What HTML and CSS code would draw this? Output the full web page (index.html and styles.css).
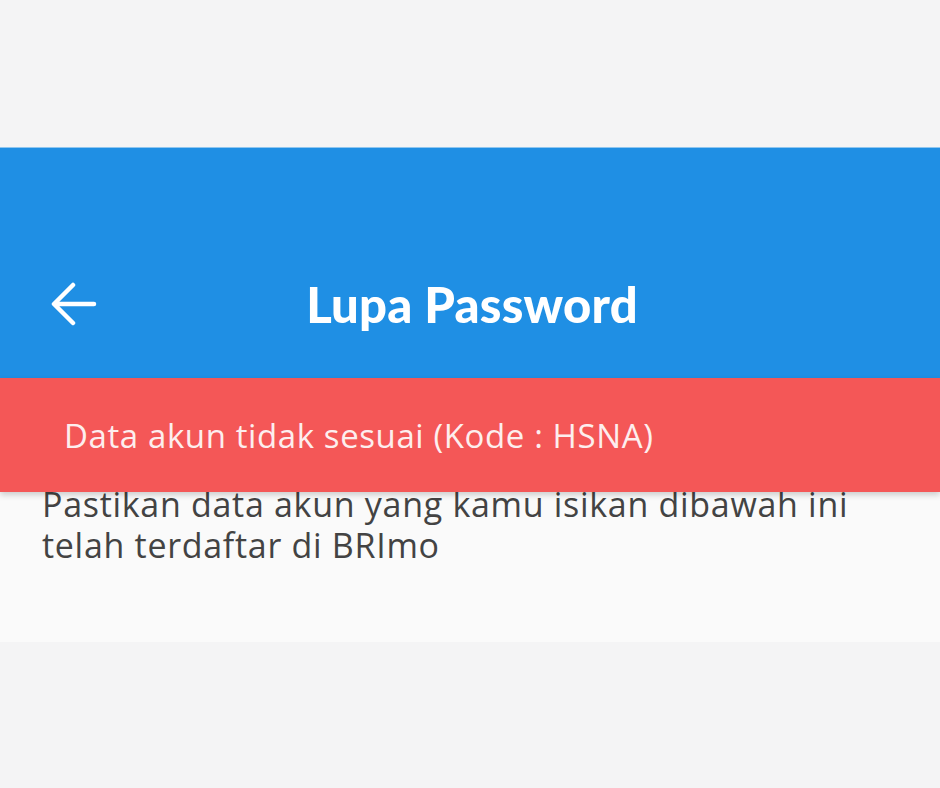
FILE: index.html
```html
<!DOCTYPE html>
<html lang="id">
<head>
    <meta charset="UTF-8">
    <meta name="viewport" content="width=device-width, initial-scale=1.0">
    <title>Lupa Password</title>
    <link rel="stylesheet" href="styles.css">
</head>
<body>
    <div class="status-space"></div>

    <div class="app-bar">
        <a class="back-btn" href="#" aria-label="Kembali">
            <svg width="48" height="44" viewBox="0 0 48 44">
                <path d="M44 22 H5 M23 3 L4 22 L23 41" fill="none" stroke="#ffffff" stroke-width="4.5" stroke-linecap="round" stroke-linejoin="round"/>
            </svg>
        </a>
        <h1 class="app-title">Lupa Password</h1>
        <div class="bar-spacer"></div>
    </div>

    <div class="snackbar">Data akun tidak sesuai (Kode : HSNA)</div>

    <div class="content">
        <p class="info">Pastikan data akun yang kamu isikan dibawah ini telah terdaftar di BRImo</p>
    </div>
</body>
</html>
```

FILE: styles.css
```css
body {
    margin: 0;
    font-family: "Open Sans", Lato, "Liberation Sans", sans-serif;
    background-color: #f4f4f5;
}
.status-space {
    height: 147px;
    border-bottom: 1px solid #8fc6ef;
}
.app-bar {
    height: 230px;
    background-color: #1f8fe4;
    display: flex;
    align-items: center;
    padding: 82px 46px 0 50px;
    box-sizing: border-box;
}
.back-btn {
    display: flex;
    width: 48px;
}
.app-title {
    flex: 1;
    margin: 0;
    text-align: center;
    color: #ffffff;
    font-family: Lato, "Open Sans", sans-serif;
    font-size: 49px;
    font-weight: 900;
    letter-spacing: 0.2px;
}
.bar-spacer {
    width: 48px;
}
.snackbar {
    position: relative;
    z-index: 1;
    height: 114px;
    margin-bottom: -8px;
    box-sizing: border-box;
    padding: 0 64px;
    display: flex;
    align-items: center;
    background-color: #f45757;
    color: #fdeeee;
    font-size: 33px;
    letter-spacing: 0.6px;
    box-shadow: 0 3px 6px rgba(0, 0, 0, 0.18);
}
.content {
    background-color: #fafafa;
    padding: 0 42px;
    height: 158px;
}
.info {
    margin: 0;
    max-width: 850px;
    color: #434343;
    font-size: 34px;
    line-height: 41px;
    letter-spacing: 0.7px;
}
```
